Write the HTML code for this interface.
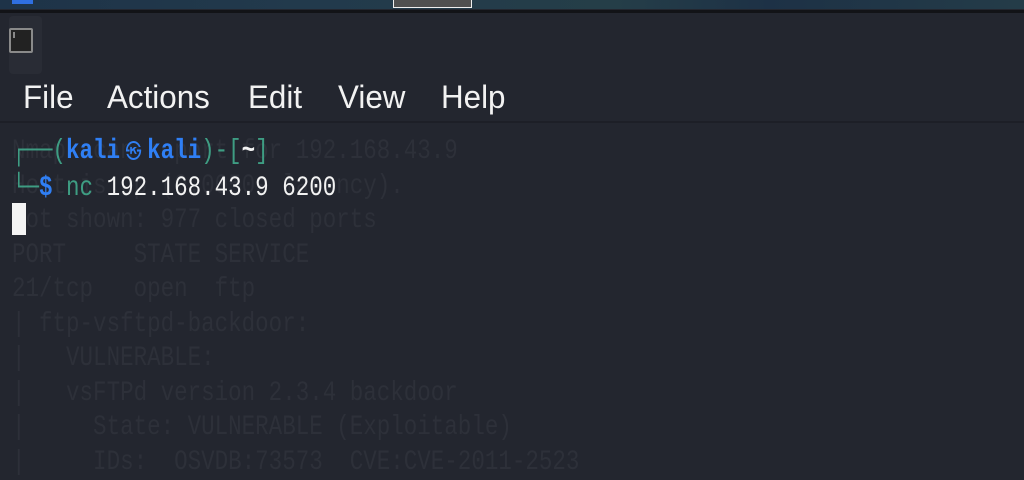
<!DOCTYPE html>
<html><head><style>
body{margin:0;width:1024px;height:454px;overflow:hidden;background:#23262f;position:relative;font-family:"Liberation Sans",sans-serif}
.tb{position:absolute;left:0;top:0;width:1024px;height:9px;background:linear-gradient(90deg,#1e3348,#223a4c 30%,#253e48 60%,#1d3146 75%,#243c48)}
.dk{position:absolute;left:0;top:10px;width:1024px;height:3px;background:#121317}
.menu{position:absolute;top:79px;font-size:32px;color:#f2f2f2;transform:scaleX(0.98);transform-origin:left}
.ln{position:absolute;left:0;width:1024px;height:2px;top:121px;background:#1d1f27}
.g,.p{position:absolute;left:12px;font-family:"Liberation Mono","DejaVu Sans Mono",monospace;font-size:28px;white-space:pre;line-height:34.5px;transform:scaleX(0.804);transform-origin:left top}
.g{color:#2d3039}
.c{display:inline-block;width:16.8px;text-align:center;overflow:visible}
.t{color:#3e9d83}.b{color:#2f7ff5;font-weight:bold}.w{color:#f2f2f2}
</style></head><body>
<div class="tb"></div>
<div style="position:absolute;left:12px;top:0;width:21px;height:4px;background:#2f6fe0"></div>
<div style="position:absolute;left:393px;top:0;width:79px;height:8px;background:#505050;border:1px solid #eee;border-top:none;box-sizing:border-box"></div>
<div class="dk"></div>
<div style="position:absolute;left:9px;top:16px;width:33px;height:58px;background:#292c35;border-radius:4px"></div>
<div style="position:absolute;left:9px;top:28px;width:24px;height:25px;border:2px solid #8a8a8a;box-sizing:border-box;background:#222;border-radius:2px"></div>
<div style="position:absolute;left:13px;top:32px;width:2px;height:6px;background:#888"></div>
<div class="menu" style="left:23px">File</div>
<div class="menu" style="left:107px">Actions</div>
<div class="menu" style="left:248px">Edit</div>
<div class="menu" style="left:338px">View</div>
<div class="menu" style="left:441px">Help</div>
<div class="ln"></div>
<div class="g" style="top:135px">Nmap scan report for 192.168.43.9
Host is up (0.0050s latency).
Not shown: 977 closed ports
PORT     STATE SERVICE
21/tcp   open  ftp
| ftp-vsftpd-backdoor:
|   VULNERABLE:
|   vsFTPd version 2.3.4 backdoor
|     State: VULNERABLE (Exploitable)
|     IDs:  OSVDB:73573  CVE:CVE-2011-2523</div>
<div class="p" style="top:135px"><span class="t"><span class="c">┌</span><span class="c">─</span><span class="c">─</span>(</span><span class="b">kali</span><span class="c b" style="width:33.6px;font-size:20px;font-weight:normal">㉿</span><span class="b">kali</span><span class="t">)-[</span><span class="w" style="font-weight:bold">~</span><span class="t">]</span>
<span class="t"><span class="c">└</span><span class="c">─</span></span><span class="b">$</span> <span class="t">nc</span> <span class="w">192.168.43.9 6200</span></div>
<div style="position:absolute;left:12px;top:203px;width:14px;height:32px;background:#f4f4f4"></div>
</body></html>
